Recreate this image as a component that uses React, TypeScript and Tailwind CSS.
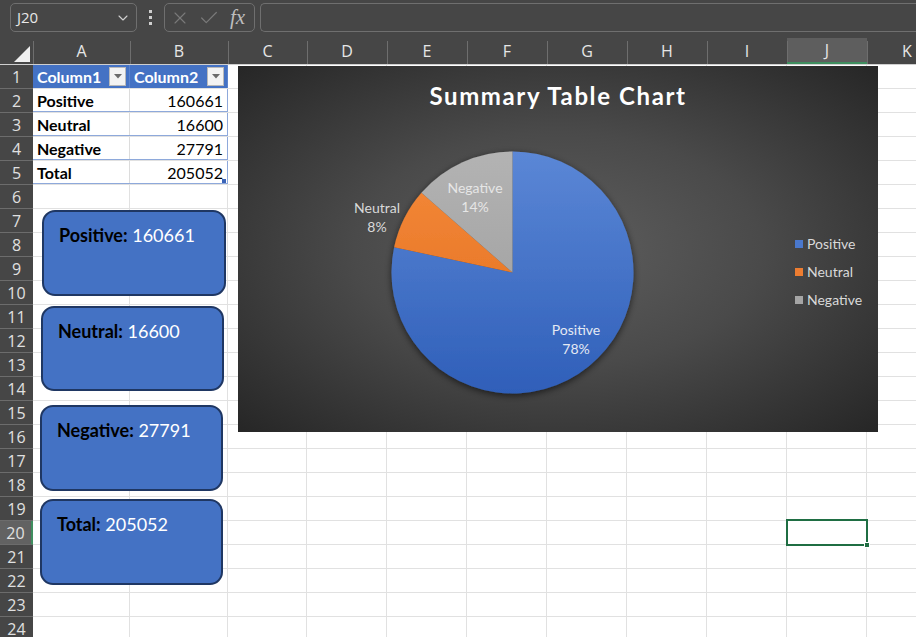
import React from "react";
import { ChevronDown, X, Check } from "lucide-react";

const cols = [
  { l: "A", w: "w-[97px]" },
  { l: "B", w: "w-[98px]" },
  { l: "C", w: "w-[79px]" },
  { l: "D", w: "w-[80px]" },
  { l: "E", w: "w-[80px]" },
  { l: "F", w: "w-[80px]" },
  { l: "G", w: "w-[80px]" },
  { l: "H", w: "w-[80px]" },
  { l: "I", w: "w-[80px]" },
  { l: "J", w: "w-[80px]" },
  { l: "K", w: "w-[80px]" },
];

const rows = Array.from({ length: 24 }, (_, i) => i + 1);

const table = [
  ["Positive", "160661"],
  ["Neutral", "16600"],
  ["Negative", "27791"],
  ["Total", "205052"],
];

function FilterBtn() {
  return (
    <div className="absolute right-[3px] top-[2px] w-[17px] h-[19px] bg-[#f3f3f3] border border-[#b9b9b9] flex items-center justify-center">
      <svg width="8" height="5" viewBox="0 0 8 5">
        <polygon points="0,0 8,0 4,4.5" fill="#6b6b6b" />
      </svg>
    </div>
  );
}

function Cell({ r, ci }: { r: number; ci: number }) {
  const c = cols[ci];
  if (r === 1 && ci < 2) {
    return (
      <div
        className={`${c.w} h-full relative shrink-0 bg-[#4472c4] border-r border-[#5b83cc] flex items-center pl-[4px] text-white font-bold text-[16px]`}
      >
        {ci === 0 ? "Column1" : "Column2"}
        <FilterBtn />
      </div>
    );
  }
  if (r >= 2 && r <= 5 && ci < 2) {
    const v = table[r - 2];
    return (
      <div
        className={`${c.w} h-full relative shrink-0 bg-white flex items-center text-[16px] text-black ${
          ci === 0
            ? "font-bold pl-[4px] border-r border-[#dcdcdc]"
            : "justify-end pr-[4px] border-r border-[#8ea9db]"
        }`}
      >
        {ci === 0 ? v[0] : v[1]}
        {r === 5 && ci === 1 && (
          <div className="absolute right-[1px] bottom-[1px] w-[4px] h-[4px] bg-[#3b64b8]" />
        )}
      </div>
    );
  }
  return <div className={`${c.w} h-full shrink-0 border-r border-[#e1e1e1]`} />;
}

function InfoBox({
  pos,
  label,
  value,
}: {
  pos: string;
  label: string;
  value: string;
}) {
  return (
    <div
      className={`absolute ${pos} bg-[#4472c4] border-2 border-[#1f3763] rounded-[13px] pl-[15px] pt-[12px] text-[18px] leading-[22px]`}
    >
      <span className="font-bold text-black">{label}</span>
      <span className="text-white"> {value}</span>
    </div>
  );
}

function polar(cx: number, cy: number, r: number, deg: number) {
  const a = (deg * Math.PI) / 180;
  return [cx + r * Math.sin(a), cy - r * Math.cos(a)];
}

function slice(cx: number, cy: number, r: number, a0: number, a1: number) {
  const [x0, y0] = polar(cx, cy, r, a0);
  const [x1, y1] = polar(cx, cy, r, a1);
  const large = a1 - a0 > 180 ? 1 : 0;
  return `M ${cx} ${cy} L ${x0} ${y0} A ${r} ${r} 0 ${large} 1 ${x1} ${y1} Z`;
}

function Chart() {
  const total = 205052;
  const pos = (160661 / total) * 360;
  const neu = pos + (16600 / total) * 360;
  const cx = 274.5;
  const cy = 206.5;
  const r = 121;
  return (
    <div className="absolute left-[205px] top-[1px] w-[640px] h-[366px] bg-[radial-gradient(ellipse_at_center,#5e5e5e_0%,#4a4a4a_45%,#262626_100%)]">
      <div className="absolute left-0 right-0 top-[17px] text-center text-white font-bold text-[24px] leading-[26px] tracking-[1.6px]">
        Summary Table Chart
      </div>
      <svg className="absolute inset-0" width="640" height="366" viewBox="0 0 640 366">
        <defs>
          <linearGradient id="gBlue" x1="0" y1={cy - r} x2="0" y2={cy + r} gradientUnits="userSpaceOnUse">
            <stop offset="0" stopColor="#5b87d6" />
            <stop offset="1" stopColor="#2f5fb9" />
          </linearGradient>
          <linearGradient id="gOrange" x1="0" y1={cy - r} x2="0" y2={cy + r} gradientUnits="userSpaceOnUse">
            <stop offset="0" stopColor="#f58a3a" />
            <stop offset="1" stopColor="#e06c1c" />
          </linearGradient>
          <linearGradient id="gGray" x1="0" y1={cy - r} x2="0" y2={cy + r} gradientUnits="userSpaceOnUse">
            <stop offset="0" stopColor="#b3b3b3" />
            <stop offset="1" stopColor="#999999" />
          </linearGradient>
          <filter id="sh" x="-20%" y="-20%" width="140%" height="140%">
            <feDropShadow dx="0" dy="2" stdDeviation="3.5" floodColor="#000" floodOpacity="0.6" />
          </filter>
        </defs>
        <g filter="url(#sh)">
          <path d={slice(cx, cy, r, 0, pos)} fill="url(#gBlue)" />
          <path d={slice(cx, cy, r, pos, neu)} fill="url(#gOrange)" />
          <path d={slice(cx, cy, r, neu, 359.999)} fill="url(#gGray)" />
        </g>
        <g fontFamily="Lato, 'Noto Sans', sans-serif" fontSize="14" textAnchor="middle">
          <text x="139" y="147" fill="#d9d9d9">Neutral</text>
          <text x="139" y="166" fill="#d9d9d9">8%</text>
          <text x="237" y="127" fill="#e6e6e6">Negative</text>
          <text x="237" y="146" fill="#e6e6e6">14%</text>
          <text x="338" y="269" fill="#e4e9f3">Positive</text>
          <text x="338" y="288" fill="#e4e9f3">78%</text>
        </g>
      </svg>
      <div className="absolute left-[557px] top-[169px] flex flex-col gap-[10px] text-[14px] leading-[18px] text-[#d9d9d9]">
        <div className="flex items-center gap-[4px]">
          <span className="w-[8px] h-[8px] bg-[#4a78cc]" />
          Positive
        </div>
        <div className="flex items-center gap-[4px]">
          <span className="w-[8px] h-[8px] bg-[#ed7d31]" />
          Neutral
        </div>
        <div className="flex items-center gap-[4px]">
          <span className="w-[8px] h-[8px] bg-[#a5a5a5]" />
          Negative
        </div>
      </div>
    </div>
  );
}

export default function App() {
  return (
    <div className="w-[916px] h-[637px] overflow-hidden bg-white font-['Lato','Noto_Sans',sans-serif]">
      {/* formula bar */}
      <div className="h-[38px] bg-[#464646] flex items-start pt-[3px] pl-[10px] gap-0">
        <div className="w-[127px] h-[29px] border border-[#6f6f6f] rounded-[5px] flex items-center justify-between pl-[6px] pr-[5px] text-[#e8e8e8] text-[15px] font-['Open_Sans',sans-serif]">
          <span>J20</span>
          <ChevronDown size={16} color="#d0d0d0" strokeWidth={1.6} />
        </div>
        <div className="w-[27px] h-[29px] flex flex-col items-center justify-center gap-[3px]">
          <span className="w-[3px] h-[3px] bg-[#cfcfcf]" />
          <span className="w-[3px] h-[3px] bg-[#cfcfcf]" />
          <span className="w-[3px] h-[3px] bg-[#cfcfcf]" />
        </div>
        <div className="w-[91px] h-[29px] border border-[#6f6f6f] rounded-[5px] flex items-center pl-[5px] gap-[8px]">
          <X size={20} color="#7a7a7a" strokeWidth={1.3} />
          <Check size={22} color="#7a7a7a" strokeWidth={1.3} />
          <span className="text-[#bdbdbd] italic text-[21px] leading-none font-['Liberation_Serif',serif] pl-[2px]">
            fx
          </span>
        </div>
        <div className="ml-[5px] flex-1 h-[29px] border border-[#6f6f6f] rounded-l-[5px] border-r-0" />
      </div>
      {/* column headers */}
      <div className="h-[27px] bg-[#464646] flex overflow-hidden border-b border-[#cfcfcf] text-[#e6e6e6] text-[16px] font-['Open_Sans',sans-serif]">
        <div className="w-[33px] h-full shrink-0 relative">
          <svg className="absolute left-[14px] top-[8px]" width="16" height="16" viewBox="0 0 16 16">
            <polygon points="16,0 16,16 0,16" fill="#f0f0f0" />
          </svg>
        </div>
        {cols.map((c) => (
          <div
            key={c.l}
            className={`${c.w} h-full shrink-0 relative flex items-center justify-center after:content-[''] after:absolute after:left-0 after:top-[3px] after:bottom-0 after:w-px after:bg-[#6e6e6e] ${
              c.l === "J" ? "bg-[#5e5e5e] border-b-2 border-[#3f8e5f]" : ""
            }`}
          >
            {c.l}
          </div>
        ))}
      </div>
      {/* body */}
      <div className="flex">
        <div className="w-[33px] shrink-0 bg-[#464646] text-[#e0e0e0] text-[16px] font-['Open_Sans',sans-serif]">
          {rows.map((r) => (
            <div
              key={r}
              className={`h-[24px] border-b border-[#6c6c6c] flex items-center justify-center ${
                r === 20 ? "bg-[#626262] border-r-2 border-r-[#3f8e5f]" : ""
              }`}
            >
              {r}
            </div>
          ))}
        </div>
        <div className="relative flex-1 overflow-hidden">
          {rows.map((r) => (
            <div key={r} className="h-[24px] flex border-b border-[#e1e1e1]">
              {cols.map((c, ci) => (
                <Cell key={c.l} r={r} ci={ci} />
              ))}
            </div>
          ))}
          {/* table row separators */}
          <div className="absolute left-0 top-[23px] w-[195px] h-[96px] pointer-events-none flex flex-col">
            <div className="h-[24px] border-b border-[#8ea9db]" />
            <div className="h-[24px] border-b border-[#8ea9db]" />
            <div className="h-[24px] border-b border-[#8ea9db]" />
            <div className="h-[24px] border-b border-[#8ea9db]" />
          </div>
          <Chart />
          <InfoBox pos="left-[9px] top-[145px] w-[184px] h-[86px]" label="Positive:" value="160661" />
          <InfoBox pos="left-[8px] top-[241px] w-[183px] h-[85px]" label="Neutral:" value="16600" />
          <InfoBox pos="left-[7px] top-[340px] w-[183px] h-[86px]" label="Negative:" value="27791" />
          <InfoBox pos="left-[7px] top-[434px] w-[183px] h-[86px]" label="Total:" value="205052" />
          {/* selected cell J20 */}
          <div className="absolute left-[753px] top-[454px] w-[82px] h-[27px] border-2 border-[#1f6e43]">
            <div className="absolute right-[-4px] bottom-[-4px] w-[6px] h-[6px] bg-[#1f6e43] border border-white" />
          </div>
        </div>
      </div>
    </div>
  );
}
